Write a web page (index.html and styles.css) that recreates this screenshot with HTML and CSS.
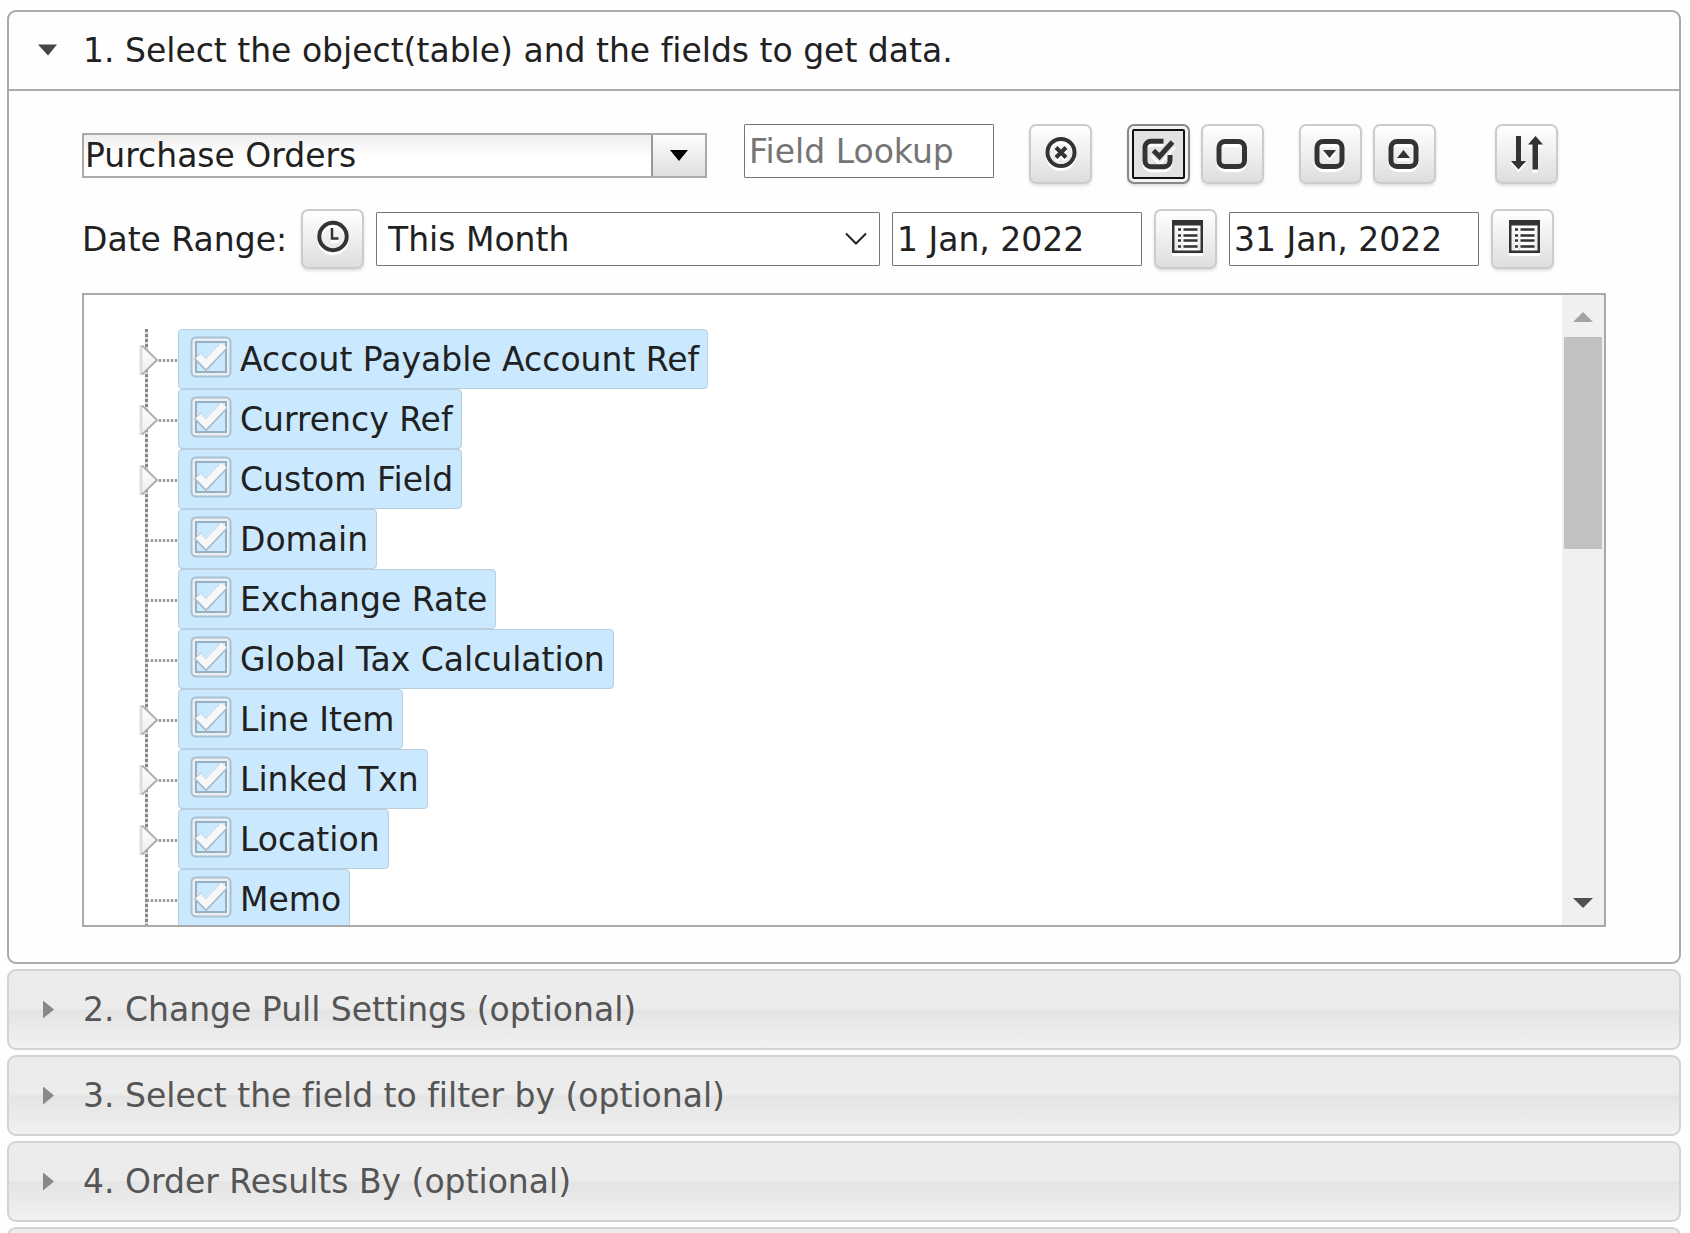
FILE: index.html
```html
<!DOCTYPE html>
<html lang="en">
<head>
    <meta charset="UTF-8">
    <meta name="viewport" content="width=device-width, initial-scale=1.0">
    <title>Get Data</title>
    <link rel="stylesheet" href="styles.css">
</head>
<body>
    <!-- Step 1 -->
    <details class="step" open>
        <summary class="step-header">1. Select the object(table) and the fields to get data.</summary>
        <div class="step-content">
            <div class="toolbar">
                <div class="combobox">
                    <input type="text" class="combobox-input" value="Purchase Orders" aria-label="Object">
                    <button type="button" class="combobox-button" aria-label="Show all objects"></button>
                </div>
                <input type="text" class="text-input" placeholder="Field Lookup" aria-label="Field Lookup">
                <button type="button" class="icon-button first" aria-label="Clear lookup">
                    <svg viewBox="0 0 34 34"><circle cx="17" cy="16.5" r="13.5" fill="none" stroke="#333" stroke-width="4"/><path d="M12 11.5l10 10M22 11.5l-10 10" stroke="#333" stroke-width="4"/></svg>
                </button>
                <button type="button" class="icon-button first active" aria-label="Check all">
                    <svg viewBox="0 0 34 34"><path d="M21.5 5.2H9a6 6 0 0 0-6 6v13.5a6 6 0 0 0 6 6h13a6 6 0 0 0 6-6V19" fill="none" stroke="#333" stroke-width="5"/><path d="M11.5 14.5l6 6L30.5 6" fill="none" stroke="#e4e4e4" stroke-width="9"/><path d="M11.5 14.5l6 6L30.5 6" fill="none" stroke="#333" stroke-width="5"/></svg>
                </button>
                <button type="button" class="icon-button" aria-label="Uncheck all">
                    <svg viewBox="0 0 34 34"><rect x="3" y="5.5" width="25.5" height="25" rx="6" fill="none" stroke="#333" stroke-width="5"/></svg>
                </button>
                <button type="button" class="icon-button first" aria-label="Expand all">
                    <svg viewBox="0 0 34 34"><rect x="3" y="5.5" width="25" height="25" rx="6" fill="none" stroke="#333" stroke-width="5"/><path d="M9 14h13l-6.500 8z" fill="#333"/></svg>
                </button>
                <button type="button" class="icon-button" aria-label="Collapse all">
                    <svg viewBox="0 0 34 34"><rect x="3" y="5.5" width="25" height="25" rx="6" fill="none" stroke="#333" stroke-width="5"/><path d="M9 22h13l-6.500-8z" fill="#333"/></svg>
                </button>
                <button type="button" class="icon-button last" aria-label="Sort">
                    <svg viewBox="0 0 34 34"><path d="M6 0h5v25h5l-7.500 8.500L1 25h5zM22.500 33.500h5.500V8.500h5L25.500 0 18 8.500h4.500z" fill="#333"/></svg>
                </button>
            </div>

            <div class="toolbar date-range">
                <label for="range">Date Range:</label>
                <button type="button" class="icon-button" aria-label="Date range options">
                    <svg viewBox="0 0 34 34"><circle cx="17" cy="15.5" r="13.7" fill="none" stroke="#333" stroke-width="4"/><path d="M16 7v10.5h6.5" fill="none" stroke="#333" stroke-width="2.5"/></svg>
                </button>
                <select id="range" class="range-select">
                    <option>This Month</option>
                </select>
                <input type="text" class="text-input" value="1 Jan, 2022" aria-label="Start date">
                <button type="button" class="icon-button" aria-label="Pick start date">
                    <svg viewBox="0 0 34 34"><path d="M3 -1h31v33H3zM5.5 4.5v25h26v-25z" fill="#333" fill-rule="evenodd"/><path d="M9 8.5h3m2.5 0h14M9 14.5h3m2.5 0h14M9 19.5h3m2.5 0h14M9 25.5h3m2.5 0h14" stroke="#333" stroke-width="2.5"/></svg>
                </button>
                <input type="text" class="text-input" value="31 Jan, 2022" aria-label="End date">
                <button type="button" class="icon-button" aria-label="Pick end date">
                    <svg viewBox="0 0 34 34"><path d="M3 -1h31v33H3zM5.5 4.5v25h26v-25z" fill="#333" fill-rule="evenodd"/><path d="M9 8.5h3m2.5 0h14M9 14.5h3m2.5 0h14M9 19.5h3m2.5 0h14M9 25.5h3m2.5 0h14" stroke="#333" stroke-width="2.5"/></svg>
                </button>
            </div>

            <!-- Field tree -->
            <div class="tree-box">
                <ul class="tree">
                    <li><button type="button" class="toggle" aria-label="Expand"></button><label class="field"><input type="checkbox" checked>Accout Payable Account Ref</label></li>
                    <li><button type="button" class="toggle" aria-label="Expand"></button><label class="field"><input type="checkbox" checked>Currency Ref</label></li>
                    <li><button type="button" class="toggle" aria-label="Expand"></button><label class="field"><input type="checkbox" checked>Custom Field</label></li>
                    <li><label class="field"><input type="checkbox" checked>Domain</label></li>
                    <li><label class="field"><input type="checkbox" checked>Exchange Rate</label></li>
                    <li><label class="field"><input type="checkbox" checked>Global Tax Calculation</label></li>
                    <li><button type="button" class="toggle" aria-label="Expand"></button><label class="field"><input type="checkbox" checked>Line Item</label></li>
                    <li><button type="button" class="toggle" aria-label="Expand"></button><label class="field"><input type="checkbox" checked>Linked Txn</label></li>
                    <li><button type="button" class="toggle" aria-label="Expand"></button><label class="field"><input type="checkbox" checked>Location</label></li>
                    <li><label class="field"><input type="checkbox" checked>Memo</label></li>
                </ul>
                <div class="scrollbar">
                    <button type="button" class="scroll-up" aria-label="Scroll up"></button>
                    <div class="scroll-thumb"></div>
                    <button type="button" class="scroll-down" aria-label="Scroll down"></button>
                </div>
            </div>
        </div>
    </details>

    <!-- Optional steps -->
    <details class="step">
        <summary class="step-header">2. Change Pull Settings (optional)</summary>
    </details>
    <details class="step">
        <summary class="step-header">3. Select the field to filter by (optional)</summary>
    </details>
    <details class="step">
        <summary class="step-header">4. Order Results By (optional)</summary>
    </details>
    <details class="step">
        <summary class="step-header"></summary>
    </details>
</body>
</html>
```

FILE: styles.css
```css
* {
    box-sizing: border-box;
}
body {
    height: 100vh;
    margin: 0;
    padding: 10px 9px 0 7px;
    overflow: hidden;
    background-color: #fefefe;
    color: #212121;
    font-family: Verdana, "DejaVu Sans", sans-serif;
    font-size: 33px;
    font-variant-ligatures: none;
}
input, select, button {
    margin: 0;
    font: inherit;
    color: inherit;
}

/* Accordion */
.step {
    margin-bottom: 5px;
}
.step-header {
    display: flex;
    align-items: center;
    height: 81px;
    padding-left: 29px;
    border: 2px solid #d3d3d3;
    border-radius: 9px;
    background: linear-gradient(#ececec 48%, #e4e4e4 51%, #f1f1f1);
    color: #555;
    cursor: pointer;
}
.step-header::before {
    content: "";
    width: 45px;
    height: 18px;
    background: #888;
    clip-path: polygon(5px 0, 16px 9px, 5px 18px);
}
.step[open] > .step-header {
    border-color: #aaa;
    border-radius: 9px 9px 0 0;
    background: #fefefe;
    color: #212121;
}
.step[open] > .step-header::before {
    background: #454545;
    clip-path: polygon(0 3px, 19px 3px, 10px 14px);
}
.step-content {
    padding: 33px 73px 35px;
    border: 2px solid #aaa;
    border-top: none;
    border-radius: 0 0 9px 9px;
}

/* Toolbars */
.toolbar {
    display: flex;
    align-items: flex-start;
    gap: 11px;
    margin-bottom: 25px;
}
.date-range {
    align-items: center;
    gap: 12px;
    margin-bottom: 24px;
}
.date-range label {
    width: 207px;
    white-space: nowrap;
}
.combobox {
    display: flex;
    width: 625px;
    height: 45px;
    margin: 9px 26px 0 0;
    border: 2px solid #aaa;
}
.combobox-input {
    flex: 1;
    min-width: 0;
    padding: 0 1px;
    border: none;
    background: linear-gradient(#eee, #fff 50%);
}
.combobox-button {
    display: flex;
    align-items: center;
    justify-content: center;
    width: 54px;
    padding: 0;
    border: none;
    border-left: 2px solid #999;
    background: linear-gradient(#fefefe, #dedede);
}
.combobox-button::before {
    content: "";
    width: 18px;
    height: 11px;
    background: #000;
    clip-path: polygon(0 0, 100% 0, 50% 100%);
}
.text-input {
    width: 250px;
    height: 54px;
    padding: 0 4px;
    border: 1px solid #767676;
    border-radius: 1px;
    background: #fff;
}
.text-input::placeholder {
    color: #757575;
}
.range-select {
    width: 504px;
    height: 54px;
    padding: 0 11px;
    border: 1px solid #767676;
    border-radius: 1px;
    appearance: none;
    background: #fff url("data:image/svg+xml,%3Csvg xmlns='http://www.w3.org/2000/svg' width='22' height='14'%3E%3Cpath d='M1 1.500l10 10 10-10' fill='none' stroke='%23212121' stroke-width='2'/%3E%3C/svg%3E") no-repeat right 12px center;
}
.icon-button {
    display: flex;
    align-items: center;
    justify-content: center;
    width: 63px;
    height: 60px;
    padding: 0 0 2px;
    border: 2px solid #ccc;
    border-radius: 7px;
    background: linear-gradient(#fff, #dedede);
    box-shadow: 0 2px 3px rgba(0, 0, 0, 0.12);
}
.icon-button svg {
    flex: none;
    width: 34px;
    height: 34px;
    overflow: visible;
    filter: drop-shadow(0 3px 0 #fff);
}
.icon-button.first {
    margin-left: 24px;
}
.icon-button.last {
    margin-left: 48px;
}
.icon-button.active {
    border-color: #888;
    background: #e2e2e2;
    outline: 2px solid #101010;
    outline-offset: -7px;
    box-shadow: inset 0 0 0 3px #f3f3f3, 0 2px 3px rgba(0, 0, 0, 0.12);
}

/* Field tree */
.tree-box {
    display: flex;
    height: 634px;
    border: 2px solid #aaa;
    background: #fff;
}
.tree {
    flex: 1;
    margin: 0;
    padding: 34px 0 0 55px;
    overflow: auto;
    scrollbar-width: none;
    list-style: none;
}
.tree li {
    display: flex;
    height: 60px;
    padding-left: 39px;
    background:
        repeating-linear-gradient(90deg, #999 0 2px, #eee 2px 4px) 8px 30px / 31px 3px no-repeat,
        repeating-linear-gradient(#888 0 3px, #ddd 3px 5px) 6px 0 / 3px 60px no-repeat;
}
.toggle {
    width: 39px;
    margin-left: -39px;
    border: none;
    background: url("data:image/svg+xml,%3Csvg xmlns='http://www.w3.org/2000/svg' width='20' height='32'%3E%3ClinearGradient id='g' x2='0' y2='1'%3E%3Cstop stop-color='%23fff'/%3E%3Cstop offset='1' stop-color='%23eee'/%3E%3C/linearGradient%3E%3Cpath d='M2 1.500L18 16 2 30.500z' fill='url(%23g)'/%3E%3Cpath d='M2 1v30' stroke='%23ddd' stroke-width='3'/%3E%3Cpath d='M3 1.500L18 16 3 30.500' fill='none' stroke='%23b0b0b0' stroke-width='2'/%3E%3C/svg%3E") no-repeat 0 15px;
}
.field {
    display: flex;
    align-items: center;
    padding: 0 8px 0 11px;
    border: 1px solid #b9cfdd;
    border-radius: 4px;
    background: #cbe9fe;
    white-space: nowrap;
}
.field input {
    width: 42px;
    height: 42px;
    margin: 0 8px 4px 0;
    appearance: none;
    background: url("data:image/svg+xml,%3Csvg xmlns='http://www.w3.org/2000/svg' width='42' height='42'%3E%3Crect x='2' y='2' width='38' height='38' rx='4' fill='none' stroke='%23a9c1d1' stroke-width='3'/%3E%3Crect x='4' y='4' width='34' height='34' rx='2' fill='%23cbe9fe' stroke='%23eceff2' stroke-width='3'/%3E%3Crect x='6' y='6' width='30' height='30' fill='none' stroke='%2395b0c2' stroke-width='2'/%3E%3Cpath d='M7 20l9 9L34 10' fill='none' stroke='%23a5bccb' stroke-width='9'/%3E%3Cpath d='M8 20l8 8L34 9' fill='none' stroke='%23f7f7f7' stroke-width='7'/%3E%3C/svg%3E") no-repeat center;
}

/* Scrollbar */
.scrollbar {
    display: flex;
    flex-direction: column;
    width: 42px;
    padding: 0 2px;
    background: #f0f0f0;
}
.scroll-thumb {
    height: 212px;
    margin-bottom: auto;
    background: #c1c1c1;
}
.scroll-up, .scroll-down {
    height: 42px;
    padding: 0;
    border: none;
    background: #a3a3a3;
    clip-path: polygon(9px 27px, 29px 27px, 19px 17px);
}
.scroll-down {
    background: #505050;
    clip-path: polygon(9px 15px, 29px 15px, 19px 25px);
}
```
